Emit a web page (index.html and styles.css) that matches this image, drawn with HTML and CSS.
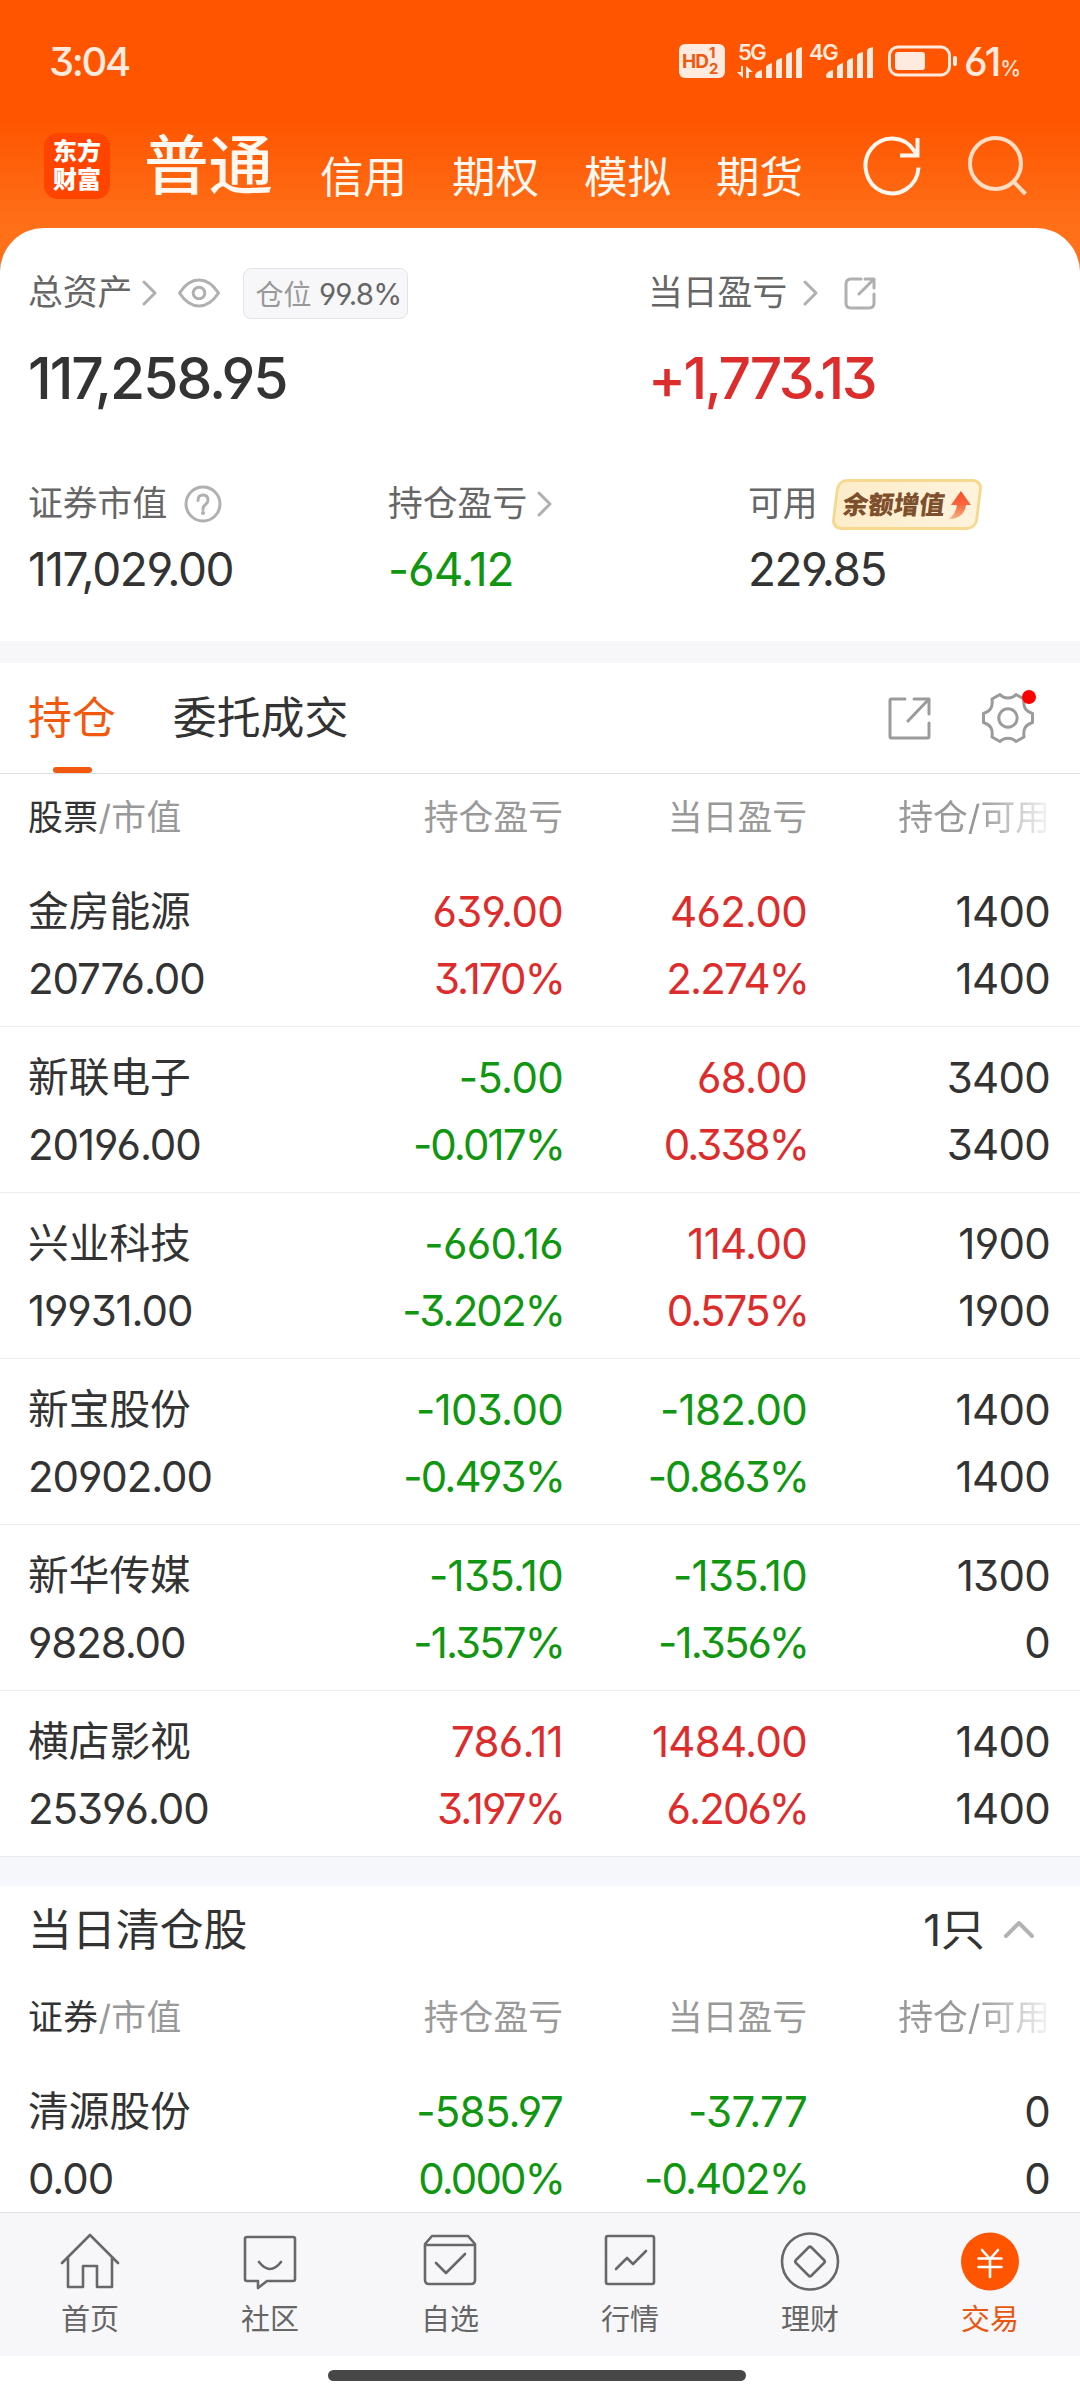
FILE: index.html
```html
<!DOCTYPE html>
<html lang="zh-CN">
<head>
<meta charset="utf-8">
<title>交易</title>
<link rel="stylesheet" href="styles.css">
</head>
<body>
<div class="screen">
  <header class="top">
    <div class="status">
      <span class="clock">3:04</span>
      <div class="status-right">
        <span class="hd">HD<span class="hd-sims"><i>1</i><i>2</i></span></span>
        <span class="signal sig5">
          <span class="net">5G</span>
          <svg width="66" height="36" viewBox="0 0 66 36"><path d="M6 23v12l-6-6h4v-6zM9 35V23l7 6h-4v6z"/><path d="M18 33q0-3 4-5l3-1v8h-5q-2 0-2-2zM29 24q0-2 6-4v15h-6zM39 19q0-3 6-4v20h-6zM49 13q0-3 6-4v26h-6zM59 8q0-3 6-4v31h-6z"/></svg>
        </span>
        <span class="signal">
          <span class="net">4G</span>
          <svg width="66" height="36" viewBox="0 0 66 36"><path d="M18 33q0-3 4-5l3-1v8h-5q-2 0-2-2zM29 24q0-2 6-4v15h-6zM39 19q0-3 6-4v20h-6zM49 13q0-3 6-4v26h-6zM59 8q0-3 6-4v31h-6z"/></svg>
        </span>
        <svg class="battery" width="70" height="32" viewBox="0 0 70 32"><rect x="1.5" y="2" width="60" height="28" rx="8.5" fill="none" stroke="#ffeadf" stroke-width="3"/><rect x="7" y="7" width="30" height="18" rx="3"/><rect x="65" y="11" width="4" height="10" rx="2"/></svg>
        <span class="pct">61<small>%</small></span>
      </div>
    </div>
    <nav class="accounts">
      <div class="logo"><span>东方</span><span>财富</span></div>
      <b class="acc-on">普通</b>
      <span class="acc">信用</span>
      <span class="acc">期权</span>
      <span class="acc">模拟</span>
      <span class="acc">期货</span>
      <svg class="refresh" width="60" height="62" viewBox="0 0 60 62" fill="none" stroke="#fff6ee" stroke-width="4"><path d="M55.500 32.500A26.500 27.500 0 1 1 51 15.500L54 20"/><path d="M54.500 3v17.500H37"/></svg>
      <svg class="search" width="62" height="62" viewBox="0 0 62 62" fill="none" stroke="#ffdcc4" stroke-width="4"><circle cx="28.500" cy="28.500" r="25.500"/><path d="M46.500 46.500L58.500 59"/></svg>
    </nav>
  </header>

  <main class="sheet">
    <section class="summary">
      <div class="row-a">
        <div class="cell-total">
          <div class="label"><span>总资产</span>
            <svg class="chev c1" width="16" height="26" viewBox="0 0 16 26"><path d="M2 2l11 11L2 24"/></svg>
            <svg class="eye" width="42" height="30" viewBox="0 0 42 30"><path d="M1.500 15Q10 2 21 2t19.500 13Q32 28 21 28T1.500 15z"/><circle cx="21" cy="15" r="5.800"/></svg>
            <span class="ratio"><span>仓位</span> 99.8%</span>
          </div>
          <div class="big n-total">117,258.95</div>
        </div>
        <div class="cell-day">
          <div class="label"><span>当日盈亏</span>
            <svg class="chev c2" width="16" height="26" viewBox="0 0 16 26"><path d="M2 2l11 11L2 24"/></svg>
            <svg class="share" width="32" height="33" viewBox="0 0 32 33"><path d="M17 2H7Q2 2 2 7v19q0 5 5 5h18q5 0 5-5v-9M21 2h9v9M30 2L15 17"/></svg>
          </div>
          <div class="big up n-day">+1,773.13</div>
        </div>
      </div>
      <div class="row-b">
        <div>
          <div class="label"><span>证券市值</span>
            <svg class="help" width="38" height="38" viewBox="0 0 38 38"><circle cx="19" cy="19" r="17"/><path d="M14 15.500q0-5.500 5-5.500t5 5q0 2.500-2.500 4.500T19 23.500v1"/><circle class="dot" cx="19" cy="28" r="2"/></svg>
          </div>
          <div class="mid n-mv">117,029.00</div>
        </div>
        <div>
          <div class="label"><span>持仓盈亏</span>
            <svg class="chev c3" width="16" height="26" viewBox="0 0 16 26"><path d="M2 2l11 11L2 24"/></svg>
          </div>
          <div class="mid down n-pl">-64.12</div>
        </div>
        <div>
          <div class="label"><span>可用</span>
            <span class="promo"><em>余额增值</em>
              <svg width="22" height="30" viewBox="0 0 22 30"><defs><linearGradient id="rise" x1="0" y1="0" x2="0" y2="1"><stop offset="0" stop-color="#fb4a2d"/><stop offset=".5" stop-color="#f8693f"/><stop offset="1" stop-color="#f6b183"/></linearGradient></defs><path fill="url(#rise)" d="M12 1l10 14h-5q-1 10-10 13-3 1-7 1 7-5 8-14H2z"/></svg>
            </span>
          </div>
          <div class="mid n-av">229.85</div>
        </div>
      </div>
    </section>

    <div class="band"></div>

    <div class="tabs">
      <span class="tab on">持仓</span>
      <span class="tab">委托成交</span>
      <svg class="export" width="43" height="43" viewBox="0 0 43 43"><path d="M17 2H3.500Q2 2 2 3.500v36Q2 41 3.500 41h36q1.500 0 1.500-1.500V26M26 2h15v15M41 2L20 24"/></svg>
      <span class="gear">
        <svg width="52" height="52" viewBox="0 0 52 52"><path d="M18 2.500C22 7 30 7 34 2.500L42 7C41 15 43 19 50.500 21.500v9C43 33 41 37 42 45l-8 4.500C30 45 22 45 18 49.500L10 45C11 37 9 33 1.500 30.500v-9C9 19 11 15 10 7z"/><circle cx="26" cy="26" r="9.200"/></svg>
        <i class="badge"></i>
      </span>
    </div>

    <section class="table">
      <div class="thead"><span><b>股票</b>/市值</span><span>持仓盈亏</span><span>当日盈亏</span><span class="fade">持仓/可用</span></div>
      <div class="trow"><div><span class="name">金房能源</span><span>20776.00</span></div><div class="up"><span>639.00</span><span class="rate">3.170%</span></div><div class="up"><span>462.00</span><span class="rate">2.274%</span></div><div><span>1400</span><span>1400</span></div></div>
      <div class="trow"><div><span class="name">新联电子</span><span>20196.00</span></div><div class="down"><span>-5.00</span><span class="rate">-0.017%</span></div><div class="up"><span>68.00</span><span class="rate">0.338%</span></div><div><span>3400</span><span>3400</span></div></div>
      <div class="trow"><div><span class="name">兴业科技</span><span>19931.00</span></div><div class="down"><span>-660.16</span><span class="rate">-3.202%</span></div><div class="up"><span>114.00</span><span class="rate">0.575%</span></div><div><span>1900</span><span>1900</span></div></div>
      <div class="trow"><div><span class="name">新宝股份</span><span>20902.00</span></div><div class="down"><span>-103.00</span><span class="rate">-0.493%</span></div><div class="down"><span>-182.00</span><span class="rate">-0.863%</span></div><div><span>1400</span><span>1400</span></div></div>
      <div class="trow"><div><span class="name">新华传媒</span><span>9828.00</span></div><div class="down"><span>-135.10</span><span class="rate">-1.357%</span></div><div class="down"><span>-135.10</span><span class="rate">-1.356%</span></div><div><span>1300</span><span>0</span></div></div>
      <div class="trow"><div><span class="name">横店影视</span><span>25396.00</span></div><div class="up"><span>786.11</span><span class="rate">3.197%</span></div><div class="up"><span>1484.00</span><span class="rate">6.206%</span></div><div><span>1400</span><span>1400</span></div></div>
    </section>

    <div class="band cool"></div>

    <section class="table">
      <div class="cleared"><span>当日清仓股</span><span class="count">1只</span>
        <svg width="32" height="20" viewBox="0 0 32 20"><path d="M3 17L16 4l13 13"/></svg>
      </div>
      <div class="thead second"><span><b>证券</b>/市值</span><span>持仓盈亏</span><span>当日盈亏</span><span class="fade">持仓/可用</span></div>
      <div class="trow last"><div><span class="name">清源股份</span><span>0.00</span></div><div class="down"><span>-585.97</span><span class="rate">0.000%</span></div><div class="down"><span>-37.77</span><span class="rate">-0.402%</span></div><div><span>0</span><span>0</span></div></div>
    </section>
  </main>

  <nav class="bottom">
    <div class="item"><svg width="60" height="60" viewBox="0 0 60 60"><path d="M2 31L30 3l28 28M8 26v29h15V34h14v21h15V26"/></svg>首页</div>
    <div class="item"><svg width="60" height="60" viewBox="0 0 60 60"><path d="M7 5h46q2 0 2 2v40q0 2-2 2H27l-9 7v-7H7q-2 0-2-2V7q0-2 2-2zM19 30q11 14 22 0"/></svg>社区</div>
    <div class="item"><svg width="60" height="60" viewBox="0 0 60 60"><path d="M5 12l7-8h36l7 8v36q0 4-4 4H9q-4 0-4-4zM5 13h50M16 31l10 10 19-19"/></svg>自选</div>
    <div class="item"><svg width="60" height="60" viewBox="0 0 60 60"><path d="M8 4h44q2 0 2 2v44q0 2-2 2H8q-2 0-2-2V6q0-2 2-2zM16 37l11-11 6 6 13-13"/></svg>行情</div>
    <div class="item"><svg width="60" height="60" viewBox="0 0 60 60"><circle cx="30" cy="29.500" r="28"/><path d="M28.500 15.500q1.500-1.500 3 0l12.500 12.500q1.500 1.500 0 3L31.500 43.500q-1.500 1.500-3 0L16 31q-1.500-1.500 0-3z"/></svg>理财</div>
    <div class="item active"><svg class="coin" width="60" height="60" viewBox="0 0 60 60"><circle cx="30" cy="29.500" r="29"/><path d="M22 18l8 9 8-9M30 27v18M18.500 26.500h23M18.500 35h23"/></svg>交易</div>
  </nav>
  <div class="home"><i></i></div>
</div>
</body>
</html>
```
FILE: styles.css
```css
* { box-sizing: border-box; }

body {
  margin: 0;
  font-family: Inter, "Noto Sans CJK SC", sans-serif;
  font-feature-settings: "cv03", "cv04", "cv09", "calt" 0;
  color: #333;
  background: #fff;
}

i, em { font-style: normal; }

.screen {
  width: 1080px;
  height: 2400px;
  overflow: hidden;
  display: flex;
  flex-direction: column;
  background: #fff;
}

.up { color: #dc2c2c; }
.down { color: #109610; }

/* header */
.top {
  height: 272px;
  flex: none;
  background: linear-gradient(#ff5500 0, #ff5500 118px, #ff7019 228px);
}

.status {
  height: 122px;
  padding: 0 60px 0 49px;
  display: flex;
  align-items: center;
  color: #ffeadf;
  fill: #ffeadf;
}

.clock { font-size: 40px; font-weight: 500; letter-spacing: -2.4px; }
.status-right { margin-left: auto; display: flex; align-items: center; }

.hd {
  width: 46px;
  height: 34px;
  border-radius: 6px;
  background: #ffeadf;
  color: #ec5a12;
  font-size: 19px;
  font-weight: 700;
  letter-spacing: -1px;
  padding-left: 3px;
  display: flex;
  align-items: center;
}
.hd-sims { display: flex; flex-direction: column; font-size: 15px; line-height: 16px; margin-left: 1px; }

.signal { position: relative; width: 71px; height: 36px; }
.sig5 { margin-left: 12px; }
.signal svg { display: block; }
.net {
  position: absolute;
  left: 1px;
  top: -1px;
  font-size: 22px;
  line-height: 20px;
  font-weight: 600;
  letter-spacing: -1.5px;
}

.battery { margin-left: 9px; }
.pct { width: 56px; margin-left: 6px; font-size: 40px; font-weight: 500; letter-spacing: -3px; white-space: nowrap; }
.pct small { font-size: 21px; margin-left: 2px; }

.accounts { display: flex; align-items: flex-start; padding-left: 44px; color: #fff8f0; }

.logo {
  width: 66px;
  height: 66px;
  margin-top: 11px;
  border-radius: 14px;
  background: #ff4400;
  color: #fff;
  font-size: 24px;
  font-weight: 900;
  line-height: 28px;
  padding-top: 5px;
  display: flex;
  flex-direction: column;
  align-items: center;
}

.acc-on { font-size: 64.500px; font-weight: 500; line-height: 89px; margin-left: 34px; }
.acc { font-size: 43.500px; line-height: 64px; margin-top: 23px; width: 87px; margin-left: 45px; }
.acc-on + .acc { margin-left: 47px; }
.refresh { margin: 13px 0 0 60px; }
.search { margin: 13px 0 0 44px; }

/* summary sheet */
.sheet {
  flex: 1;
  min-height: 0;
  margin-top: -44px;
  border-radius: 44px 44px 0 0;
  background: #fff;
  overflow: hidden;
}

.summary { height: 413px; padding: 40px 0 0 28px; }
.row-a { display: grid; grid-template-columns: 620px 1fr; height: 178px; }
.row-b { display: grid; grid-template-columns: 360px 360px 1fr; padding-top: 33px; }

.label {
  display: flex;
  align-items: center;
  height: 50px;
  font-size: 34.800px;
  line-height: 49px;
  color: #666;
  white-space: nowrap;
}
.label > span:first-child { padding-bottom: 1px; }
.label svg { fill: none; stroke: #b0b0b0; stroke-width: 3; stroke-linecap: round; stroke-linejoin: round; flex: none; }
.label .dot { fill: #b0b0b0; stroke: none; }

.c1 { margin-left: 10px; }
.eye { margin-left: 20px; }
.ratio {
  margin-left: 23px;
  width: 165px;
  height: 51px;
  border: 1px solid #e2e3e6;
  border-radius: 8px;
  background: #f7f7fa;
  font-size: 29.500px;
  line-height: 50px;
  padding-left: 11px;
  letter-spacing: -0.8px;
}
.ratio span { font-size: 28px; color: #999; letter-spacing: 0; }
.c2 { margin-left: 16px; }
.share { margin-left: 25px; }
.c3 { margin-left: 10px; }
.help { margin-left: 17px; }

.big { font-size: 57px; font-weight: 500; line-height: 70px; margin-top: 26px; }
.mid { font-size: 46px; line-height: 60px; margin-top: 10px; }
.n-total { letter-spacing: -2px; }
.n-day { letter-spacing: -2.5px; }
.n-mv { letter-spacing: -1.4px; }
.n-pl { letter-spacing: -1.1px; }
.n-av { letter-spacing: -1.5px; }

.label .promo {
  position: relative;
  width: 146px;
  height: 51px;
  margin-left: 16px;
  border: 3px solid #f6d98f;
  border-radius: 10px;
  background: linear-gradient(90deg, #fdecc9, #fff3dc);
  transform: skewX(-7deg);
  display: flex;
  align-items: center;
  padding-left: 6px;
}
.promo em { font-size: 25.500px; font-weight: 900; color: #7d4f2c; line-height: 44px; }
.promo svg { stroke: none; transform: skewX(7deg); margin-left: 4px; }

.band { height: 22px; background: #f7f7fa; }
.band.cool { height: 29px; background: #f6f7fa; }

/* tabs */
.tabs { display: flex; align-items: center; height: 111px; padding: 0 46px 0 28px; border-bottom: 1px solid #dfdfdf; }
.tab { position: relative; font-size: 43.900px; line-height: 108px; padding-bottom: 1px; }
.tab + .tab { margin-left: 57px; }
.tab.on { color: #f2590f; }
.tab.on::after {
  content: "";
  position: absolute;
  left: 25px;
  bottom: 0;
  width: 39px;
  height: 6px;
  border-radius: 3px;
  background: #f2590f;
}
.export, .gear svg { fill: none; stroke: #9b9b9b; stroke-width: 3; stroke-linecap: round; stroke-linejoin: round; }
.export { margin-left: auto; }
.gear { position: relative; width: 52px; height: 52px; margin-left: 51px; }
.badge { position: absolute; right: -2px; top: -2px; width: 14px; height: 14px; border-radius: 50%; background: #f00; }

/* holdings */
.thead, .trow { display: grid; grid-template-columns: 319px 215px 244px 243px; padding: 0 31px 0 28px; }
.thead { height: 87px; font-size: 34.800px; line-height: 87px; color: #999; }
.thead b { font-weight: 400; color: #333; }
.thead > span:first-child { letter-spacing: 0.4px; }
.thead span + span { text-align: right; margin-right: -1px; }
.fade { -webkit-mask-image: linear-gradient(90deg, #000 172px, rgba(0,0,0,.1) 243px); mask-image: linear-gradient(90deg, #000 172px, rgba(0,0,0,.1) 243px); }

.trow { height: 166px; padding-top: 17px; border-bottom: 1px solid #ececee; font-size: 42px; line-height: 67px; letter-spacing: -0.7px; }
.trow > div { display: flex; flex-direction: column; }
.trow > div:first-child { letter-spacing: -1.1px; }
.trow > div + div { align-items: flex-end; }
.trow > div + div > span { margin-right: -1px; }
.trow .rate { letter-spacing: -1.9px; margin-right: -2px; }
.trow .name { font-size: 40.700px; letter-spacing: 0; }

.cleared { display: flex; align-items: center; height: 86px; padding: 0 45px 0 28px; font-size: 43.900px; }
.cleared span { padding-bottom: 5px; }
.count { margin-left: auto; }
.cleared svg { margin-left: 18px; fill: none; stroke: #b3b3b3; stroke-width: 4; stroke-linecap: round; stroke-linejoin: round; }
.thead.second { height: 89px; line-height: 90px; }

/* bottom bar */
.bottom { height: 144px; flex: none; display: grid; grid-template-columns: repeat(6, 180px); background: #f7f7fa; border-top: 1px solid #e2e2e5; }
.item { display: flex; flex-direction: column; align-items: center; padding-top: 19px; font-size: 29px; line-height: 56px; color: #666; }
.item svg { fill: none; stroke: #686868; stroke-width: 2.600px; stroke-linejoin: round; stroke-linecap: round; }
.active { color: #e8560f; }
.item .coin { stroke: #fff; }
.coin circle { fill: #ff5500; stroke: none; }
.home { height: 44px; flex: none; display: flex; justify-content: center; padding-top: 14px; }
.home i { width: 418px; height: 11px; border-radius: 6px; background: #474747; margin-right: 6px; }
```
